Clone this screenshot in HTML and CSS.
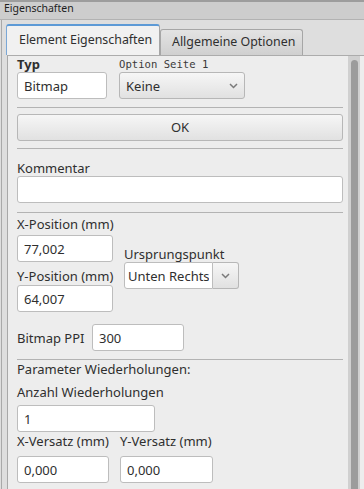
FILE: index.html
```html
<!DOCTYPE html>
<html lang="de">
<head>
  <meta charset="UTF-8" />
  <title>Eigenschaften</title>
  <link rel="stylesheet" href="styles.css">
</head>
<body>

  <div class="titlebar">Eigenschaften</div>

  <div class="window">
    <div class="tabs">
      <div class="tab active">Element Eigenschaften</div>
      <div class="tab">Allgemeine Optionen</div>
    </div>

    <div class="pane">
      <div class="content">

        <div class="top-row">
          <div class="label bold">Typ</div>
          <div class="label mono">Option Seite 1</div>
          <input class="field" type="text" value="Bitmap" />
          <div class="select">
            <span>Keine</span>
            <svg width="9" height="6" viewBox="0 0 9 6"><path d="M1 1 L4.5 4.5 L8 1" fill="none" stroke="#7a7a7a" stroke-width="1.5"/></svg>
          </div>
        </div>

        <div class="sep sep-1"></div>
        <div class="button">OK</div>
        <div class="sep sep-2"></div>

        <div class="label comment-label">Kommentar</div>
        <input class="field" type="text" value="" />

        <div class="sep sep-3"></div>

        <div class="position">
          <div class="pos-left">
            <div class="label">X-Position (mm)</div>
            <input class="field x-input" type="text" value="77,002" />
            <div class="label y-label">Y-Position (mm)</div>
            <input class="field y-input" type="text" value="64,007" />
          </div>
          <div class="pos-right">
            <div class="label">Ursprungspunkt</div>
            <div class="combo">
              <input class="field combo-text" type="text" value="Unten Rechts" />
              <div class="combo-btn">
                <svg width="9" height="6" viewBox="0 0 9 6"><path d="M1 1 L4.5 4.5 L8 1" fill="none" stroke="#7a7a7a" stroke-width="1.5"/></svg>
              </div>
            </div>
          </div>
        </div>

        <div class="ppi-row">
          <div class="label ppi-label">Bitmap PPI</div>
          <input class="field ppi-input" type="text" value="300" />
        </div>

        <div class="sep sep-4"></div>

        <div class="label param-label">Parameter Wiederholungen:</div>
        <div class="label count-label">Anzahl Wiederholungen</div>
        <input class="field count-input" type="text" value="1" />

        <div class="offset-row">
          <div class="offset-col">
            <div class="label">X-Versatz (mm)</div>
            <input class="field" type="text" value="0,000" />
          </div>
          <div class="offset-col wide">
            <div class="label">Y-Versatz (mm)</div>
            <input class="field" type="text" value="0,000" />
          </div>
        </div>

      </div>
      <div class="scrollbar"><div class="thumb"></div></div>
    </div>
  </div>

</body>
</html>
```

FILE: styles.css
```css
:root {
  --text: #2f2f2f;
  --border: #bdbdbd;
  --pane-bg: #ededed;
  --line: #b3b3b3;
}

* {
  box-sizing: border-box;
  margin: 0;
  padding: 0;
}

html, body {
  width: 364px;
  height: 489px;
  overflow: hidden;
}

body {
  font-family: "Noto Sans", sans-serif;
  font-size: 13px;
  color: var(--text);
  background: #dedede;
  display: flex;
  flex-direction: column;
}

.titlebar {
  height: 20px;
  border-top: 2px solid #9d9d9d;
  border-bottom: 1px solid #b2b2b2;
  background: #cdcdcd;
  font-size: 10.5px;
  line-height: 13px;
  padding-left: 4px;
  color: #1e1e1e;
}

.window {
  flex: 1;
  margin-left: 1px;
  border-left: 1px solid #a9a9a9;
  padding: 4px 0 0 4px;
  display: flex;
  flex-direction: column;
  min-height: 0;
}

/* tabs */
.tabs {
  display: flex;
  align-items: flex-end;
  height: 31px;
}

.tab {
  width: 143px;
  height: 26px;
  border: 1px solid #a6a6a6;
  border-bottom: none;
  border-radius: 3px 3px 0 0;
  background: linear-gradient(#e3e3e3, #d0d0d0);
  padding-left: 11px;
  font-size: 12.4px;
  line-height: 24px;
  white-space: nowrap;
}

.tab.active {
  width: 154px;
  height: 31px;
  border-top: 2px solid #5d9ad6;
  border-left-color: #7aa7d6;
  background: #f1f1f1;
  padding-left: 12px;
  line-height: 28px;
}

/* pane */
.pane {
  flex: 1;
  display: flex;
  margin-left: 1px;
  border-left: 1px solid #a8a8a8;
  border-top: 1px solid #acacac;
  background: var(--pane-bg);
  padding-right: 4px;
  min-height: 0;
}

.content {
  width: 340px;
  padding: 0 5px 0 9px;
  display: flex;
  flex-direction: column;
  overflow: hidden;
}

.scrollbar {
  width: 12px;
  background: #d0d0d0;
  padding: 4px 2px 0 3px;
}

.thumb {
  height: 100%;
  background: #9c9c9c;
  border-radius: 4px 4px 0 0;
}

/* controls */
.label {
  line-height: 16px;
  white-space: nowrap;
}

.bold {
  font-weight: bold;
}

.mono {
  font-family: "DejaVu Sans Mono", monospace;
  font-size: 10.6px;
  color: #3a3a3a;
}

.field {
  display: block;
  width: 100%;
  height: 27px;
  border: 1px solid var(--border);
  border-radius: 3px;
  background: #fff;
  padding: 0 6px;
  font: inherit;
  color: var(--text);
  line-height: 25px;
  outline: none;
}

.select,
.button,
.combo-btn {
  height: 27px;
  border: 1px solid #b7b7b7;
  border-radius: 3px;
  background: linear-gradient(#f6f6f6, #e1e1e1);
}

.select {
  display: flex;
  align-items: center;
  justify-content: space-between;
  padding: 0 6px 0 6px;
}

.button {
  text-align: center;
  line-height: 25px;
}

.sep {
  height: 1px;
  background: var(--line);
}

.top-row {
  display: grid;
  grid-template-columns: 90px 126px;
  column-gap: 12px;
}

.sep-1 { margin: 8px 0 6px; }
.sep-2 { margin-top: 7px; }
.sep-3 { margin-top: 9px; }
.sep-4 { margin-top: 8px; }

.comment-label { margin-top: 11px; }

.position {
  display: flex;
  gap: 11px;
  margin-top: 3px;
}

.pos-left {
  width: 96px;
}

.x-input { margin-top: 3px; }
.y-label { margin-top: 6px; }
.y-input { margin-top: 1px; }

.pos-right {
  margin-top: 30px;
}

.combo {
  display: flex;
}

.combo-text {
  width: 89px;
  padding: 0 3px;
  border-radius: 3px 0 0 3px;
}

.combo-btn {
  width: 26px;
  border-left: none;
  border-radius: 0 3px 3px 0;
  display: flex;
  align-items: center;
  justify-content: center;
}

.ppi-row {
  display: flex;
  align-items: center;
  margin-top: 12px;
}

.ppi-label {
  width: 75px;
}

.ppi-input {
  width: 92px;
}

.param-label { margin-top: 1px; }
.count-label { margin-top: 7px; }

.count-input {
  width: 138px;
  margin-top: 5px;
}

.offset-row {
  display: flex;
  gap: 11px;
  margin-top: 1px;
}

.offset-col {
  width: 92px;
}

.offset-col.wide {
  width: 93px;
}

.offset-col .field {
  margin-top: 7px;
}
```
